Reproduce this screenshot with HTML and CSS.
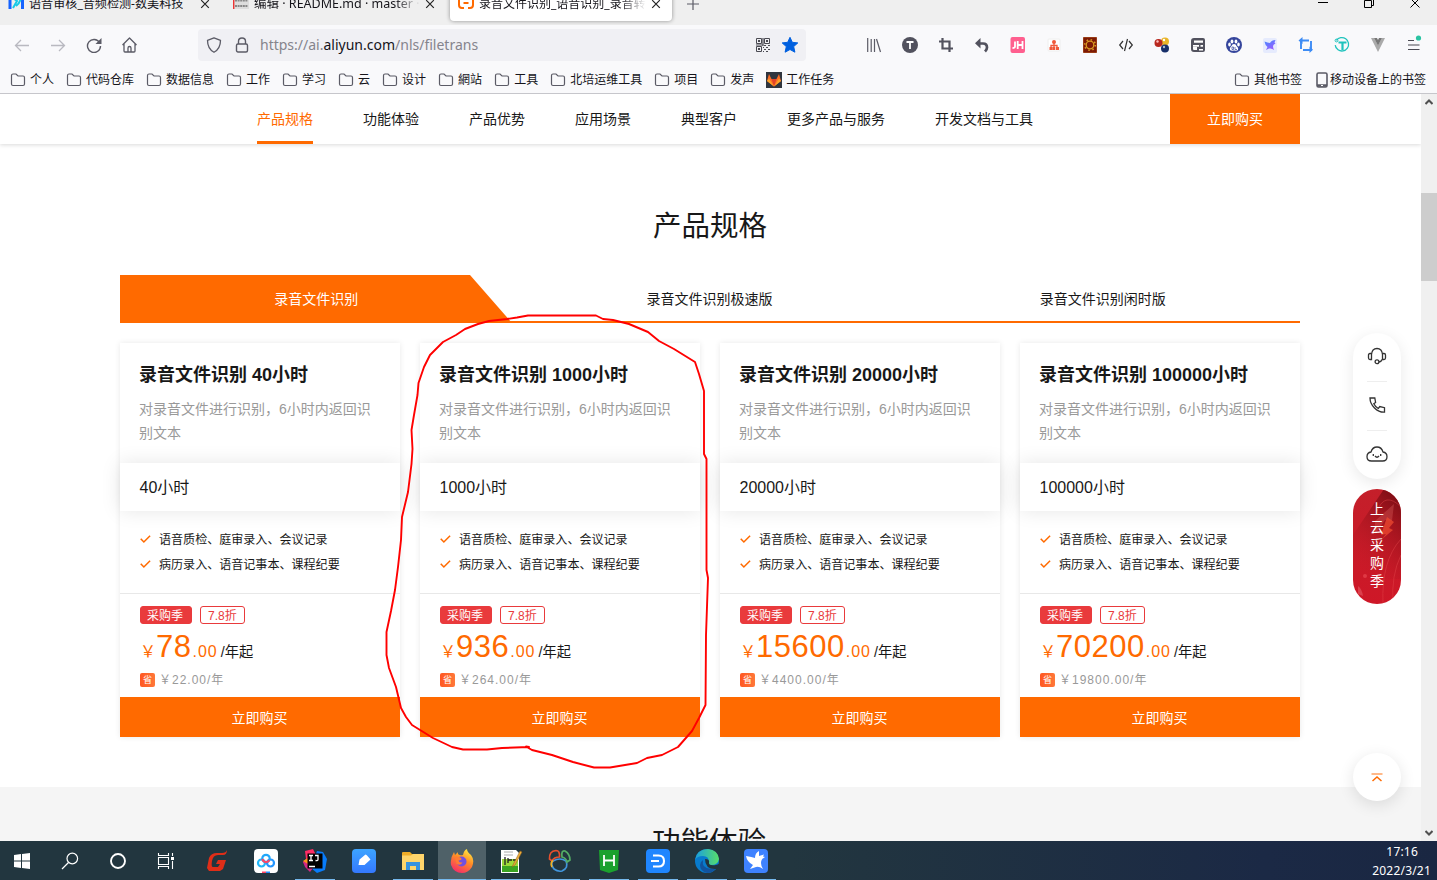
FILE: index.html
```html
<!DOCTYPE html>
<html lang="zh-CN">
<head>
<meta charset="utf-8">
<title>录音文件识别</title>
<link rel="stylesheet" href="styles.css">
</head>
<body>
<svg class="defs" width="0" height="0">
  <symbol id="folder" viewBox="0 0 16 16"><path d="M1.500 12V3.500q0-1.500 1.500-1.500h3l2 2h5q1.500 0 1.500 1.500V12q0 1.500-1.500 1.500H3Q1.500 13.500 1.500 12z" fill="none" stroke="#5b5b66" stroke-width="1.200"/></symbol>
  <symbol id="close" viewBox="0 0 10 10"><path d="M1.200 1.200l7.600 7.600M8.800 1.200L1.200 8.800" fill="none" stroke="#222" stroke-width="1.200"/></symbol>
  <symbol id="check" viewBox="0 0 12 10"><path d="M.8 4.800l3.400 3.400L11 1.500" fill="none" stroke="#ff6a00" stroke-width="1.700"/></symbol>
</svg>

<header class="browser">
  <div class="tabstrip">
    <div class="tab tab-first">
      <svg width="18" height="16" viewBox="0 0 18 16"><path d="M2 3v11M14.500 1v13" stroke="#1463ff" stroke-width="3"/><path d="M5 3l4 3-4 7M13 3q-1 5-5 8" stroke="#16c9e6" stroke-width="2" fill="none"/></svg>
      <span class="tab-title">语音审核_音频检测-数美科技</span>
      <svg class="x" width="10" height="10"><use href="#close"/></svg>
    </div>
    <div class="tab tab-second">
      <svg width="16" height="16" viewBox="0 0 16 16"><path d="M0 0h16v14H0z" fill="#ddd"/><path d="M.7 0v14" stroke="#e33" stroke-width="1.400"/><path d="M2 5.500h13M2 11h13" stroke="#888" stroke-dasharray="2 .6" stroke-width="2"/></svg>
      <span class="tab-title">编辑 · README.md · master · s</span>
      <svg class="x" width="10" height="10"><use href="#close"/></svg>
    </div>
    <div class="tab tab-active">
      <svg width="16" height="16" viewBox="0 0 16 16"><path d="M6 2H4Q1 2 1 5v5q0 3 3 3h2M10 2h2q3 0 3 3v5q0 3-3 3h-2M5.500 8h5" fill="none" stroke="#ff6a00" stroke-width="2"/></svg>
      <span class="tab-title">录音文件识别_语音识别_录音转文</span>
      <svg class="x" width="10" height="10"><use href="#close"/></svg>
    </div>
    <svg class="plus" width="12" height="12" viewBox="0 0 12 12"><path d="M6 0v12M0 6h12" stroke="#5b5b66" stroke-width="1.200"/></svg>
    <div class="winbtns">
      <svg width="10" height="10" viewBox="0 0 10 10"><path d="M0 4.500h10" stroke="#000"/></svg>
      <svg width="10" height="10" viewBox="0 0 10 10"><path d="M.5 2.500h7v7h-7zM2.500 2V.5h7v7H8" fill="none" stroke="#000"/></svg>
      <svg width="10" height="10" viewBox="0 0 10 10"><path d="M.5.5l9 9M9.500.5l-9 9" stroke="#000"/></svg>
    </div>
  </div>

  <div class="toolbar">
    <div class="navbtns">
      <svg width="16" height="16" viewBox="0 0 16 16" fill="none" stroke="#b9b9c0" stroke-width="1.300"><path d="M15 8.500H1.500M7 3L1.500 8.500 7 14"/></svg>
      <svg width="16" height="16" viewBox="0 0 16 16" fill="none" stroke="#b9b9c0" stroke-width="1.300"><path d="M1 8.500h13.500M9 3l5.500 5.500L9 14"/></svg>
      <svg width="16" height="16" viewBox="0 0 16 16" fill="none" stroke="#5b5b66" stroke-width="1.400"><path d="M13.500 5.500a6.500 6.500 0 1 0 1 3.500"/><path d="M15.500 1v6h-6z" fill="#5b5b66" stroke="none"/></svg>
      <svg width="16" height="16" viewBox="0 0 16 16" fill="none" stroke="#5b5b66" stroke-width="1.300" stroke-linejoin="round"><path d="M.5 8l7-7 7 7M2 7v7q0 1 1 1h9q1 0 1-1V7M6 15v-4q0-1.500 1.500-1.500T9 11v4"/></svg>
    </div>
    <div class="urlbar">
      <svg width="16" height="16" viewBox="0 0 16 16" fill="none" stroke="#5b5b66" stroke-width="1.300"><path d="M8 .8l6.500 2.500q0 8.500-6.500 12Q1.500 11.800 1.500 3.300z" stroke-linejoin="round"/></svg>
      <svg class="lock" width="14" height="16" viewBox="0 0 14 16" fill="none" stroke="#5b5b66" stroke-width="1.400"><rect x="1.500" y="7" width="11" height="8" rx="1.500"/><path d="M3.500 7V4.500Q3.500 1 7 1t3.500 3.500V7"/></svg>
      <span class="url">https://ai.<b>aliyun.com</b>/nls/filetrans</span>
      <svg width="14" height="14" viewBox="0 0 14 14" fill="none" stroke="#4a4a52"><path d="M.5.500h5v5h-5zM8.500.500h5v5h-5zM.5 8.500h5v5h-5z"/><path d="M2 3h2M10 3h2M2 11h2" stroke-width="2"/><path d="M7 0v8M0 7h7M8 7.500h2M12 7.500h2M10 9.500h2M8 11.500h2M12 11.500h2M10 13.500h2M7 9.500h1M7 13.500h1" stroke-width="1.200"/></svg>
      <svg width="16" height="16" viewBox="0 0 16 16"><path d="M8 .3l2.300 5 5.500.6-4.100 3.700 1.200 5.600L8 12.500l-4.900 2.700 1.200-5.600L.2 5.900l5.500-.6z" fill="#0060df" stroke="#0060df" stroke-linejoin="round"/></svg>
    </div>
    <div class="exts">
      <svg viewBox="0 0 16 16"><path d="M1.700 1v14M5.200 2v13M8.500 2v13M10.500 2l4 13" stroke="#5b5b66" stroke-width="1.200"/></svg>
      <svg viewBox="0 0 16 16"><circle cx="8" cy="8" r="8" fill="#52525e"/><path d="M4.500 5h7M8 5v7" stroke="#fff" stroke-width="1.800"/></svg>
      <svg viewBox="0 0 16 16"><path d="M4.500 1v10.500H15M1 4.500h10.500V15" fill="none" stroke="#52525e" stroke-width="2.200"/></svg>
      <svg viewBox="0 0 16 16"><path d="M4 6.500h5q4 0 4 4 0 2-2 4" fill="none" stroke="#52525e" stroke-width="2.700"/><path d="M6.500 1v10.500L1 6.200z" fill="#52525e"/></svg>
      <svg viewBox="0 0 16 16"><rect x=".5" width="14.500" height="16" rx="2" fill="#ff5f8f"/><path d="M5 4.500v5q0 1.500-2.500 1.500M7.700 4v8M12.500 4v8M7.700 8h4.800" fill="none" stroke="#fff" stroke-width="1.800"/></svg>
      <svg viewBox="0 0 16 16"><rect x="2" y="2" width="12" height="12" rx="1" fill="#fff" stroke="#eee"/><circle cx="8" cy="5" r="2" fill="#f05a3c"/><path d="M8 5v7M5 11V8.500h6V11" stroke="#f05a3c" fill="none" stroke-width="1.300"/><path d="M3.500 10h3v3h-3zM6.700 10h2.600v3H6.700zM10 10h3v3h-3z" fill="#f05a3c"/></svg>
      <svg viewBox="0 0 16 16"><path d="M1.500.500h13v15h-13z" fill="#7c1905" stroke="#983b15"/><circle cx="8" cy="8" r="3.800" fill="none" stroke="#d99a22" stroke-width="1.300"/><circle cx="8" cy="8" r="5.300" fill="none" stroke="#d99a22" stroke-width="1.600" stroke-dasharray="1.500 2.660"/></svg>
      <svg viewBox="0 0 16 16"><path d="M5 4L1.700 8 5 12M11 4l3.300 4-3.300 4M9.500 2l-3 12" fill="none" stroke="#333" stroke-width="1.200"/></svg>
      <svg viewBox="0 0 16 16"><circle cx="11" cy="4.500" r="4" fill="#e9b529"/><circle cx="4.500" cy="6" r="4" fill="#b8281e"/><circle cx="11" cy="11.500" r="4" fill="#172f69"/><circle cx="3.500" cy="4.500" r="1.200" fill="#fbb"/><circle cx="10" cy="3" r="1.200" fill="#fff"/><circle cx="10" cy="10" r="1.200" fill="#abc"/></svg>
      <svg viewBox="0 0 16 16"><path d="M4 1h9q2 0 2 2v10q0 2-2 2H7V10H1V4q0-3 3-3z" fill="#52525e"/><path d="M4 3.500h9v2.300H4zM3 8h6v1.800H3zM10.500 8H13v1.800h-2.500zM9 12h4v1.500H9z" fill="#fff"/><path d="M2 9v3q0 2 2 2h4" fill="none" stroke="#52525e" stroke-width="2"/></svg>
      <svg viewBox="0 0 16 16"><circle cx="8" cy="8" r="8" fill="#35459c"/><g fill="#fff"><ellipse cx="3.500" cy="7.500" rx="1.300" ry="1.900"/><ellipse cx="6" cy="4.500" rx="1.400" ry="2"/><ellipse cx="10" cy="4.500" rx="1.400" ry="2"/><ellipse cx="12.500" cy="7.500" rx="1.300" ry="1.900"/><path d="M8 7q2 0 2.500 2 2.500 2 1.500 4-1 1-4 .5-3 .5-4-.5-1-2 1.500-4Q6 7 8 7z"/></g><path d="M6 10h1.500v2.500H6zM9 10v2.500h2" fill="none" stroke="#35459c" stroke-width=".7"/></svg>
      <svg viewBox="0 0 16 16"><defs><linearGradient id="bird" x2=".6" y2="1"><stop stop-color="#3f8bff"/><stop offset="1" stop-color="#9a5cff"/></linearGradient></defs><rect x="1" y="1" width="14" height="15" rx="2" fill="#e6ebfd"/><path d="M2.500 4.500q3 1 5.500 1.500Q9.500 3 13.500 3l-1 2.500 1 1q-2 .5-2.500 2.500 0 2 1 4-2-2-5-1.500L4 13l1.500-3Q3 8 2.500 4.500z" fill="url(#bird)"/></svg>
      <svg viewBox="0 0 16 16"><path d="M3 12V3.500h8M13 4v9H5" fill="none" stroke="#3d8cf5" stroke-width="1.900"/><path d="M4.500 0v7L.5 3.500zM11.500 9.500v6.500l3.500-3.200z" fill="#3d8cf5"/></svg>
      <svg viewBox="0 0 16 16"><circle cx="8.500" cy="8.500" r="6.700" fill="none" stroke="#1fc3bd" stroke-width="1.300" stroke-dasharray="37 5" transform="rotate(215 8 8)"/><circle cx="2.500" cy="3.500" r="1.400" fill="none" stroke="#1fc3bd"/><path d="M4.500 5.500h8M8.500 5v8" stroke="#1fc3bd" stroke-width="2.200"/></svg>
      <svg viewBox="0 0 16 16"><path d="M1 1h3l4 7 4-7h3L8 15z" fill="#aaa"/><path d="M4 1h3l1 2 1-2h3L8 8.500z" fill="#777"/></svg>
      <svg viewBox="0 0 16 16"><path d="M2 3.500h6M2 8h11.500M2 12.500h11.500" stroke="#4a4a52" stroke-width="1.200"/><circle cx="12.500" cy="1" r="2.600" fill="#2ac3a2"/></svg>
    </div>
  </div>

  <div class="bookmarks">
    <span class="bm"><svg><use href="#folder"/></svg>个人</span>
    <span class="bm"><svg><use href="#folder"/></svg>代码仓库</span>
    <span class="bm"><svg><use href="#folder"/></svg>数据信息</span>
    <span class="bm"><svg><use href="#folder"/></svg>工作</span>
    <span class="bm"><svg><use href="#folder"/></svg>学习</span>
    <span class="bm"><svg><use href="#folder"/></svg>云</span>
    <span class="bm"><svg><use href="#folder"/></svg>设计</span>
    <span class="bm"><svg><use href="#folder"/></svg>網站</span>
    <span class="bm"><svg><use href="#folder"/></svg>工具</span>
    <span class="bm"><svg><use href="#folder"/></svg>北培运维工具</span>
    <span class="bm"><svg><use href="#folder"/></svg>项目</span>
    <span class="bm"><svg><use href="#folder"/></svg>发声</span>
    <span class="bm"><svg viewBox="0 0 16 16"><path d="M0 0h16v16H0z" fill="#30353e"/><path d="M1 9l2-7 2.500 5h5L13 2l2 7-7 5.500z" fill="#fc6d26"/><path d="M5.500 7h5L8 14.500z" fill="#e24329"/><path d="M1 9l2-2.500 5 8zM15 9l-2-2.500-5 8z" fill="#fca326"/></svg>工作任务</span>
    <span class="bm bm-right"><svg><use href="#folder"/></svg>其他书签</span>
    <span class="bm bm-phone"><svg viewBox="0 0 12 16"><rect x="1" y="1" width="10" height="14" rx="1.500" fill="none" stroke="#5b5b66" stroke-width="1.600"/><path d="M1 13.500h10" stroke="#5b5b66" stroke-width="2.500"/><path d="M5 13.500h2" stroke="#fff"/></svg>移动设备上的书签</span>
  </div>
</header>

<div class="viewport">
  <main class="page">
    <nav class="subnav">
      <a class="on">产品规格</a><a>功能体验</a><a>产品优势</a><a>应用场景</a><a>典型客户</a><a>更多产品与服务</a><a>开发文档与工具</a>
      <span class="subnav-buy">立即购买</span>
    </nav>
    <section class="specs">
      <h2>产品规格</h2>
      <div class="spec-tabs">
        <div class="spec-tab active">录音文件识别</div>
        <div class="spec-tab">录音文件识别极速版</div>
        <div class="spec-tab">录音文件识别闲时版</div>
      </div>
      <div class="cards">
        <article class="card">
          <div class="card-head"><h3>录音文件识别 40小时</h3><p>对录音文件进行识别，6小时内返回识别文本</p></div>
          <div class="card-band">40小时</div>
          <ul><li><svg><use href="#check"/></svg>语音质检、庭审录入、会议记录</li><li><svg><use href="#check"/></svg>病历录入、语音记事本、课程纪要</li></ul>
          <div class="card-price">
            <div class="badges"><span class="badge solid">采购季</span><span class="badge">7.8折</span></div>
            <div class="price"><span class="small yen">￥</span><span class="big">78</span><span class="small">.00</span><span class="unit">/年起</span></div>
            <div class="save"><i>省</i><span>￥22.00/年</span></div>
          </div>
          <div class="buy">立即购买</div>
        </article>
        <article class="card">
          <div class="card-head"><h3>录音文件识别 1000小时</h3><p>对录音文件进行识别，6小时内返回识别文本</p></div>
          <div class="card-band">1000小时</div>
          <ul><li><svg><use href="#check"/></svg>语音质检、庭审录入、会议记录</li><li><svg><use href="#check"/></svg>病历录入、语音记事本、课程纪要</li></ul>
          <div class="card-price">
            <div class="badges"><span class="badge solid">采购季</span><span class="badge">7.8折</span></div>
            <div class="price"><span class="small yen">￥</span><span class="big">936</span><span class="small">.00</span><span class="unit">/年起</span></div>
            <div class="save"><i>省</i><span>￥264.00/年</span></div>
          </div>
          <div class="buy">立即购买</div>
        </article>
        <article class="card">
          <div class="card-head"><h3>录音文件识别 20000小时</h3><p>对录音文件进行识别，6小时内返回识别文本</p></div>
          <div class="card-band">20000小时</div>
          <ul><li><svg><use href="#check"/></svg>语音质检、庭审录入、会议记录</li><li><svg><use href="#check"/></svg>病历录入、语音记事本、课程纪要</li></ul>
          <div class="card-price">
            <div class="badges"><span class="badge solid">采购季</span><span class="badge">7.8折</span></div>
            <div class="price"><span class="small yen">￥</span><span class="big">15600</span><span class="small">.00</span><span class="unit">/年起</span></div>
            <div class="save"><i>省</i><span>￥4400.00/年</span></div>
          </div>
          <div class="buy">立即购买</div>
        </article>
        <article class="card">
          <div class="card-head"><h3>录音文件识别 100000小时</h3><p>对录音文件进行识别，6小时内返回识别文本</p></div>
          <div class="card-band">100000小时</div>
          <ul><li><svg><use href="#check"/></svg>语音质检、庭审录入、会议记录</li><li><svg><use href="#check"/></svg>病历录入、语音记事本、课程纪要</li></ul>
          <div class="card-price">
            <div class="badges"><span class="badge solid">采购季</span><span class="badge">7.8折</span></div>
            <div class="price"><span class="small yen">￥</span><span class="big">70200</span><span class="small">.00</span><span class="unit">/年起</span></div>
            <div class="save"><i>省</i><span>￥19800.00/年</span></div>
          </div>
          <div class="buy">立即购买</div>
        </article>
      </div>
    </section>
    <section class="experience"><h2>功能体验</h2></section>

    <aside class="floaters">
      <div class="pill">
        <svg width="20" height="20" viewBox="0 0 20 20"><path d="M4.500 13V8.500Q5 2.500 10 2.500t5.500 6V13q-1 2.500-3.500 3M4.500 7.500H3Q1.500 7.500 1.500 9v3q0 1.500 1.500 1.500h1.500zM15.500 7.500H17q1.500 0 1.500 1.500v3q0 1.500-1.500 1.500h-1.500z"/><circle cx="10" cy="15.700" r="1.900"/></svg>
        <svg width="20" height="20" viewBox="0 0 20 20"><path d="M3 3h4.800l.8 4.500-1.800 1.300q1.500 3 4.500 4.700l1.500-2 4.700 1.200v4.500Q12 17.500 7.500 13T3 3z"/></svg>
        <svg width="22" height="20" viewBox="0 0 22 20"><path d="M5.500 17Q1 17 1 12.800T5 8q1.500-5 6-5t6 5q4 .5 4 4.800T16.500 17zM7.300 10v2M14.700 10v2M9 12q2 2.500 4 0"/></svg>
      </div>
      <div class="promo">
        <svg class="promo-art" viewBox="0 0 48 115"><defs><linearGradient id="shade" x1=".8" y1="0" x2=".3" y2="1"><stop stop-color="#7c0d14"/><stop offset="1" stop-color="#c41a26" stop-opacity="0"/></linearGradient></defs><path d="M48 0H31L0 46v44h48z" fill="url(#shade)"/><path d="M22 32l19-17-2 17-7-1-10 14z" fill="#d55a58" opacity=".4"/><path d="M34 28l-6 18 5-1-4 5 11-9-4-2 5-6z" fill="#ee4a30" opacity=".75"/><path d="M48 50q-20 22-18 65M48 66q-10 20-8 49M24 22q8-20 24-4" stroke="#e4474c" fill="none" opacity=".45"/><circle cx="12" cy="87" r="2" fill="#e3404b" opacity=".8"/><path d="M5 97q4 3 5 10l-5-2z" fill="#e3505b" opacity=".7"/></svg>
        <span>上云采购季</span>
      </div>
      <div class="top"><svg width="12" height="9" viewBox="0 0 12 9"><path d="M.5 1h11" stroke="#ffb27c" stroke-width="1.800"/><path d="M1.500 8L6 4l4.500 4" fill="none" stroke="#ff6a00" stroke-width="1.500"/></svg></div>
    </aside>
  </main>
  <div class="scrollbar">
    <svg width="8" height="6" viewBox="0 0 8 6"><path d="M.5 5L4 1.500 7.500 5" fill="none" stroke="#505050" stroke-width="2"/></svg>
    <div class="thumb"></div>
    <svg class="down" width="8" height="6" viewBox="0 0 8 6"><path d="M.5 1L4 4.500 7.500 1" fill="none" stroke="#505050" stroke-width="2"/></svg>
  </div>
</div>

<footer class="taskbar">
  <div class="sys">
    <svg viewBox="0 0 24 24"><path d="M4 6l7-1v6.500H4zM12 5l8-1v7.500h-8zM4 12.500h7V19l-7-1zM12 12.500h8V20l-8-1z" fill="#fff"/></svg>
    <svg viewBox="0 0 24 24" fill="none" stroke="#fff" stroke-width="1.200"><circle cx="14.300" cy="9.500" r="5.300"/><path d="M10.500 13.500L4 20"/></svg>
    <svg viewBox="0 0 24 24" fill="none" stroke="#fff" stroke-width="1.900"><circle cx="12" cy="12" r="7"/></svg>
    <svg viewBox="0 0 24 24" fill="none" stroke="#fff" stroke-width="1.100"><path d="M4.500 8.500h10v7h-10zM4.500 4v2.500h10V4M4.500 20v-2.500h10V20M18.500 4v3M18.500 12v8"/><path d="M17 8h3v3h-3z" fill="#fff" stroke="none"/></svg>
  </div>
  <div class="apps">
    <span class="app"><svg viewBox="0 0 24 24"><path d="M22 1q0 5-4 5h-5Q8 6 7 12t1 6h5l2-3h-4l2-4h8l-3 9-3 2H4l-2-3 2-10Q6 4 12 4h5q4 0 5-3z" fill="#df2e18"/></svg></span>
    <span class="app"><svg viewBox="0 0 24 24"><rect width="24" height="24" rx="4" fill="#fff"/><g fill="none" stroke-width="2.200"><circle cx="7.500" cy="14" r="3.500" stroke="#20b7fa"/><circle cx="16.500" cy="14" r="3.500" stroke="#2395ff"/><circle cx="12" cy="9.500" r="3.700" stroke="#20a7fa"/><path d="M8.300 10q1 3 3.700 3.200 2 0 3.400-2" stroke="#ff4566"/></g><path d="M8 22.500h4v1.500H8z" fill="#ff4566"/><path d="M12 22.500h4v1.500h-4z" fill="#238dff"/></svg></span>
    <span class="app run"><svg viewBox="0 0 24 24"><path d="M2 2l8-2 3 6-7 13-6-6 3-3z" fill="#ff2d65"/><path d="M14 2l6 1 4 7-2 11-8 3-6-5z" fill="#087cfa"/><path d="M0 13l6-3 4 9-3 4-5-5z" fill="#d42884"/><path d="M0 12l5-3v6z" fill="#ff9518"/><path d="M4.500 4.500h15v15h-15z" fill="#000"/><path d="M6 6.500h4M8 6.500v5M6 11.500h4M12 6.500h3v4q0 1.500-2.500 1M6 17.500h6" fill="none" stroke="#fff" stroke-width="1.300"/></svg></span>
    <span class="app"><svg viewBox="0 0 24 24"><defs><linearGradient id="blu" x2="0" y2="1"><stop stop-color="#3da4ff"/><stop offset="1" stop-color="#3478ff"/></linearGradient></defs><rect width="24" height="24" rx="4" fill="url(#blu)"/><path d="M6.500 16l1-5.500 6-5q1 0 2 1.500l3 3.500-6 5.500z" fill="#fff"/></svg></span>
    <span class="app run"><svg viewBox="0 0 24 24"><path d="M1 4q0-1 1-1h7l2 2h11v15H1z" fill="#f0ad28"/><path d="M1 6.500h9l2-1.500h11v16H1z" fill="#ffd56b"/><path d="M5 21v-8h14v8h-4v-4H9v4z" fill="#3893df"/></svg></span>
    <span class="app run current"><svg viewBox="0 0 24 24"><defs><linearGradient id="fire" x1=".8" x2=".3" y2="1"><stop stop-color="#ffef45"/><stop offset=".45" stop-color="#ff8d26"/><stop offset="1" stop-color="#f52c69"/></linearGradient></defs><path d="M13 6q1-5 4-6 0 3 4 6 4 5 1 12-4 6-10 6-8 0-11-8-1-7 3-13l1 3 3-3q-1 4 5 3z" fill="url(#fire)"/><circle cx="11.500" cy="12.500" r="5" fill="#7150e0"/><path d="M5 8.500q4-2 6.500 1 .5 1.500-3 2 1 3 4 1.500-1 4-6 2z" fill="#ff7c34"/></svg></span>
    <span class="app run"><svg viewBox="0 0 24 24"><path d="M2 1h15l3 3v20H2z" fill="#fff"/><path d="M3 10h16v13H3z" fill="#9cda39"/><path d="M3 17h16v6H3z" fill="#3ba522"/><path d="M5 3h9M5 6h9" stroke="#aaa"/><path d="M6 8v8M9 9v5M9 11h4M14 11h3" stroke="#222" stroke-width="1.300"/><path d="M21 2l-7 14-1 2 3-2 7-13z" fill="#edae3c" stroke="#8c5a19" stroke-width=".5"/></svg></span>
    <span class="app run"><svg viewBox="0 0 24 24" fill="none" stroke-width="1.700"><path d="M5 12q7-4 13 0 3 7-4 10-4 1-8-2-4-5-1-8z" stroke="#4296dd"/><path d="M1.500 10Q1 2 8 1.500q4 0 3.500 6.500Q6 8 4 12z" stroke="#e7502e"/><path d="M14 8q-1-7 3-6 5 3 5 9l-3 2q-1-4-5-5z" stroke="#54ad65"/><path d="M4 18q-2-4 1-6.500" stroke="#efb025"/></svg></span>
    <span class="app run"><svg viewBox="0 0 24 24"><path d="M2 1h20l-1 20-9 3-9-3z" fill="#1ba12e"/><path d="M7 6v11M17 6v11M7 11.500h10" stroke="#fff" stroke-width="1.800"/></svg></span>
    <span class="app run"><svg viewBox="0 0 24 24"><rect width="24" height="24" rx="4" fill="#1f86ff"/><path d="M7 6.500h5.500Q18 6.500 18 12t-5.500 5.500H7M5 12h8" fill="none" stroke="#fff" stroke-width="2.100"/></svg></span>
    <span class="app run"><svg viewBox="0 0 24 24"><defs><linearGradient id="sea" x2="1"><stop stop-color="#1a9ee0"/><stop offset="1" stop-color="#58de69"/></linearGradient></defs><circle cx="12" cy="12" r="12" fill="#087bcd"/><path d="M0 11Q2 0 13 0q10 1 11 10-1 6-8 6-4 0-2-3 0-6-6-6-6 0-8 4z" fill="url(#sea)"/><path d="M8 11q-2 11 13 8-3 5-9 5-7-2-7-8 0-3 3-5z" fill="#12539e"/><path d="M10 10q5 0 4 4 0 3 7 2l3-1v2l-2 3q-12 1-12-10z" fill="#22343e"/></svg></span>
    <span class="app run"><svg viewBox="0 0 24 24"><rect width="24" height="24" rx="4" fill="#3e82ff"/><path d="M2 7q6 1 9 2 0-5 4-7v5l5-1.500-1 2 2 .5q-4 2-4 6 0 3 2 6-4-3-7-2l-6 2 3-4q-6-3-7-9z" fill="#fff"/></svg></span>
  </div>
  <div class="clock"><span>17:16</span><span>2022/3/21</span></div>
</footer>

<svg class="markup" viewBox="0 0 1437 880"><path d="M507 319L517 317.500 528 315.500H596L603 319 613 320 629 324 648 332 659 341 674 349 695 362 699 374 704 391V454L706.500 459V570L708 578 706 635 705.500 705 699 718 692 731 678 747 662 755 647 758 637 763 610 767.500H594L573 762 552 755 532 750 526 746.500 529 747 502 748 487 749.500H463L452 747 433 738 412 725 406 717 401 708 396 687 389 668 386.500 655 386.500 632 391 611 395 590 398 567 401 540 402 517 408 492 411.500 464 412.500 449 411.500 430 414 415 417.500 395 418.500 383 424 367 430 355 443 342 456 335 465 329 478 324 489 321 507 319z"/></svg>
</body>
</html>
```
FILE: styles.css
```css
* { box-sizing: border-box; }
body {
  margin: 0;
  width: 1437px;
  height: 880px;
  display: flex;
  flex-direction: column;
  overflow: hidden;
  position: relative;
  font-family: "Liberation Sans", "Noto Sans CJK SC", sans-serif;
  color: #181818;
  background: #fff;
}
.defs { position: absolute; }
svg { flex: none; display: block; }
h2, h3, p, ul { margin: 0; padding: 0; font-weight: 400; }

/* browser chrome */
.browser {
  height: 94px;
  flex: none;
  background: #f9f9fb;
  border-bottom: 1px solid #c6c6cb;
  font-family: "Noto Sans", "Noto Sans CJK SC", sans-serif;
}
.tabstrip { height: 25px; background: #efefef; display: flex; overflow: hidden; align-items: flex-start; }
.tab { height: 34px; margin-top: -13px; display: flex; align-items: center; font-size: 12px; color: #15141a; white-space: nowrap; }
.tab > svg:first-child { margin-top: -2px; }
.tab-title { overflow: hidden; line-height: 20px; }
.tab .x { margin-left: auto; }
.tab-first { width: 217px; padding: 0 7px 0 8px; gap: 3px; }
.tab-first .tab-title { font-size: 12.1px; }
.tab-second { width: 232px; padding: 0 14px 0 16px; gap: 5px; }
.tab-second .tab-title { width: 171px; font-size: 12.5px; -webkit-mask: linear-gradient(90deg, #000 85%, transparent); mask: linear-gradient(90deg, #000 85%, transparent); }
.tab-active { width: 222px; margin-left: 1px; padding: 0 11px 0 8px; gap: 5px; background: #fff; border-radius: 4px; box-shadow: 0 0 4px rgba(0, 0, 0, .4); }
.tab-active .tab-title { width: 170px; -webkit-mask: linear-gradient(90deg, #000 85%, transparent); mask: linear-gradient(90deg, #000 85%, transparent); }
.plus { margin: -2px 0 0 15px; }
.winbtns { margin: -2px 17px 0 auto; display: flex; gap: 36px; }

.toolbar { height: 40px; display: flex; align-items: center; }
.navbtns { display: flex; gap: 20px; padding-left: 14px; width: 198px; }
.urlbar { width: 608px; height: 32px; border-radius: 4px; background: #f0f0f4; display: flex; align-items: center; padding: 0 8px; gap: 12px; }
.lock { margin-left: 1px; }
.url { flex: 1; font-size: 14px; color: #85848c; margin-left: -1px; line-height: 20px; margin-top: -1px; }
.url b { font-weight: 400; color: #15141a; }
.exts { margin-left: auto; padding-right: 15px; display: flex; gap: 20px; }
.exts svg { width: 16px; height: 16px; overflow: visible; }

.bookmarks { height: 28px; display: flex; align-items: center; gap: 12px; padding: 1px 11px 0 10px; font-size: 12px; color: #15141a; white-space: nowrap; }
.bm { display: flex; align-items: center; gap: 4px; line-height: 18px; }
.bm svg { width: 16px; height: 16px; }
.bm-right { margin-left: auto; }
.bm-phone { gap: 2px; margin-left: 2px; }
.bm-phone svg { width: 12px; }

/* page */
.viewport { height: 747px; flex: none; display: flex; overflow: hidden; }
.page { width: 1421px; position: relative; overflow: hidden; }
.subnav { height: 50px; padding: 0 121px 0 257px; display: flex; gap: 50px; font-size: 14px; line-height: 50px; white-space: nowrap; box-shadow: 0 1px 4px rgba(0, 0, 0, .15); }
.subnav .on { color: #ff6a00; border-bottom: 3px solid #ff6a00; }
.subnav-buy { margin-left: auto; width: 130px; background: #ff6a00; color: #fff; text-align: center; }
.specs { height: 643px; padding: 61px 121px 0 120px; }
h2 { text-align: center; font-size: 28.5px; line-height: 42px; }
.spec-tabs { margin-top: 28px; height: 48px; display: grid; grid-template-columns: repeat(3, 1fr); border-bottom: 2px solid #ff6a00; font-size: 14px; line-height: 48px; text-align: center; }
.spec-tab { padding-right: 1px; }
.spec-tab.active { height: 48px; color: #fff; background: #ff6a00; clip-path: polygon(0 0, 350px 0, 392px 48px, 0 48px); }
.cards { margin-top: 20px; display: grid; grid-template-columns: repeat(4, 280px); gap: 20px; }
.card { height: 394px; display: flex; flex-direction: column; box-shadow: 0 0 6px rgba(0, 0, 0, .09); }
.card-head { height: 120px; padding: 19px 21px 0 19px; }
h3 { font-size: 18px; line-height: 26px; font-weight: 700; white-space: nowrap; }
.card-head p { margin-top: 9px; font-size: 14px; line-height: 24px; color: #999; }
.card-band { height: 48px; padding-left: 19.5px; font-size: 16px; line-height: 50px; box-shadow: 0 0 20px rgba(0, 0, 0, .1); }
.card ul { height: 83px; padding: 15px 20px 0; list-style: none; font-size: 12.05px; border-bottom: 1px solid #e8e8e8; }
.card li { height: 25px; display: flex; align-items: center; gap: 8px; white-space: nowrap; }
.card li svg { width: 11px; height: 10px; }
.card-price { height: 103px; padding: 12px 20px 0; }
.badges { display: flex; gap: 8px; }
.badge { height: 18px; padding: 0 7px; border: 1px solid #e93a3c; border-radius: 3px; color: #e93a3c; font-size: 12px; line-height: 18px; }
.badge.solid { background: #e93a3c; color: #fff; padding: 0 8px 0 6px; }
.price { height: 44px; line-height: 44px; display: flex; align-items: baseline; white-space: nowrap; color: #ff6a00; letter-spacing: 1px; margin-top: 1px; }
.price .small { font-size: 16px; }
.price .yen { letter-spacing: 0; }
.price .big { font-size: 31px; letter-spacing: .5px; margin-right: 1px; }
.price .unit { margin-left: 3px; font-size: 14.3px; letter-spacing: 0; color: #181818; }
.save { height: 20px; margin-top: 1px; display: flex; align-items: center; gap: 4px; color: #999; font-size: 12px; letter-spacing: 1px; }
.save span { line-height: 18px; margin-top: -1px; }
.save i { width: 15px; height: 14px; border-radius: 2px; background: linear-gradient(90deg, #ff5722, #ff7838); color: #fff; font-size: 9px; line-height: 14px; text-align: center; font-style: normal; letter-spacing: 0; }
.buy { height: 40px; background: #ff6a00; color: #fff; text-align: center; font-size: 14px; line-height: 42px; padding-right: 1px; }
.experience { height: 200px; background: #f5f5f5; padding: 34px 3px 0 0; }

/* floating tools */
.floaters { position: absolute; right: 20px; top: 239px; width: 48px; display: flex; flex-direction: column; }
.pill { height: 146px; border-radius: 24px; background: linear-gradient(#eee, #eee) 14px 48px / 20px 1px no-repeat, linear-gradient(#eee, #eee) 14px 97px / 20px 1px no-repeat, #fff; box-shadow: 0 4px 16px rgba(0, 0, 0, .09); display: grid; grid-template-rows: repeat(3, 49px); justify-items: center; align-items: center; }
.pill svg { fill: none; stroke: #333; stroke-width: 1.3; margin-top: -3px; }
.promo { position: relative; margin-top: 10px; height: 115px; border-radius: 24px; overflow: hidden; background: linear-gradient(#c41f2a, #ce1727); color: #fff; }
.promo-art { width: 48px; height: 115px; }
.promo span { position: absolute; left: 17px; top: 11px; width: 14px; font-size: 14px; line-height: 18px; }
.top { margin-top: 149px; width: 48px; height: 48px; border-radius: 50%; background: #fff; display: flex; align-items: center; justify-content: center; box-shadow: 0 4px 16px rgba(0, 0, 0, .11); }

.scrollbar { width: 16px; background: #f0f0f0; display: flex; flex-direction: column; align-items: center; padding: 5px 0; }
.thumb { margin-top: 88px; width: 16px; height: 88px; background: #cdcdcd; }
.down { margin-top: auto; }

/* taskbar */
.taskbar { height: 39px; flex: none; display: flex; background: linear-gradient(90deg, #22363f 0%, #22363f 55%, #1b2945 88%, #1a2742 100%); color: #fff; }
.sys { width: 193px; display: flex; gap: 24px; padding: 8px 0 0 10px; }
.sys svg, .app svg { width: 24px; height: 24px; }
.apps { display: flex; gap: 1px; }
.app { width: 48px; height: 39px; padding: 8px 12px 0; }
.app.run { background: linear-gradient(#76b9ed, #76b9ed) 4px 38px / 40px 1px no-repeat; }
.app.run.current { background: linear-gradient(#76b9ed, #76b9ed) 0 38px / 48px 1px no-repeat, #4f6168; }
.clock { margin-left: auto; padding: 1px 6px 0 0; display: flex; flex-direction: column; align-items: flex-end; font-family: "Noto Sans", sans-serif; font-size: 12px; line-height: 19px; letter-spacing: .2px; }
.clock span:first-child { padding-right: 13px; }

/* hand-drawn circle */
.markup { position: absolute; inset: 0; width: 1437px; height: 880px; fill: none; stroke: #f00; stroke-width: 1.9; stroke-linejoin: round; pointer-events: none; }
```
